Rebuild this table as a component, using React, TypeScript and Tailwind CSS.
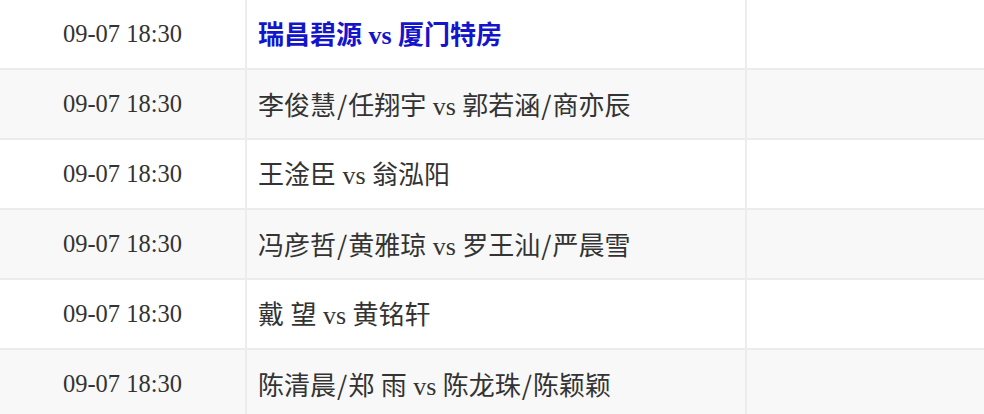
import React from 'react'

type Match = {
  time: string
  title: string
  highlight?: boolean
}

const matches: Match[] = [
  { time: '09-07 18:30', title: '瑞昌碧源 vs 厦门特房', highlight: true },
  { time: '09-07 18:30', title: '李俊慧/任翔宇 vs 郭若涵/商亦辰' },
  { time: '09-07 18:30', title: '王淦臣 vs 翁泓阳' },
  { time: '09-07 18:30', title: '冯彦哲/黄雅琼 vs 罗王汕/严晨雪' },
  { time: '09-07 18:30', title: '戴 望 vs 黄铭轩' },
  { time: '09-07 18:30', title: '陈清晨/郑 雨 vs 陈龙珠/陈颖颖' },
]

// slashes in the reference are the thin sans ones from the CJK font
const Title = ({ text }: { text: string }) => {
  const parts = text.split('/')
  return (
    <>
      {parts.map((p, i) => (
        <React.Fragment key={i}>
          {i > 0 && <span className="font-['Noto_Sans_CJK_SC'] px-[1px]">/</span>}
          {p}
        </React.Fragment>
      ))}
    </>
  )
}

export default function App() {
  return (
    <div
      className="w-[984px] h-[414px] overflow-hidden bg-white text-[#333]"
      style={{ fontFamily: '"Liberation Serif", "Noto Sans CJK SC", serif' }}
    >
      {matches.map((m, i) => (
        <div
          key={i}
          className={`flex h-[70px] border-b-2 border-[#ececec] ${i % 2 === 1 ? 'bg-[#f8f8f8]' : 'bg-white'}`}
        >
          <div className="w-[247px] shrink-0 border-r-2 border-[#ececec] flex items-center justify-center pt-[1px] text-[24.5px]">
            {m.time}
          </div>
          <div className="w-[500px] shrink-0 border-r-2 border-[#ececec] flex items-center pl-[11px] pt-[2px] text-[26px]">
            {m.highlight ? (
              <span className="text-[#1414cc] font-bold">{m.title}</span>
            ) : (
              <span>
                <Title text={m.title} />
              </span>
            )}
          </div>
          <div className="flex-1" />
        </div>
      ))}
    </div>
  )
}
